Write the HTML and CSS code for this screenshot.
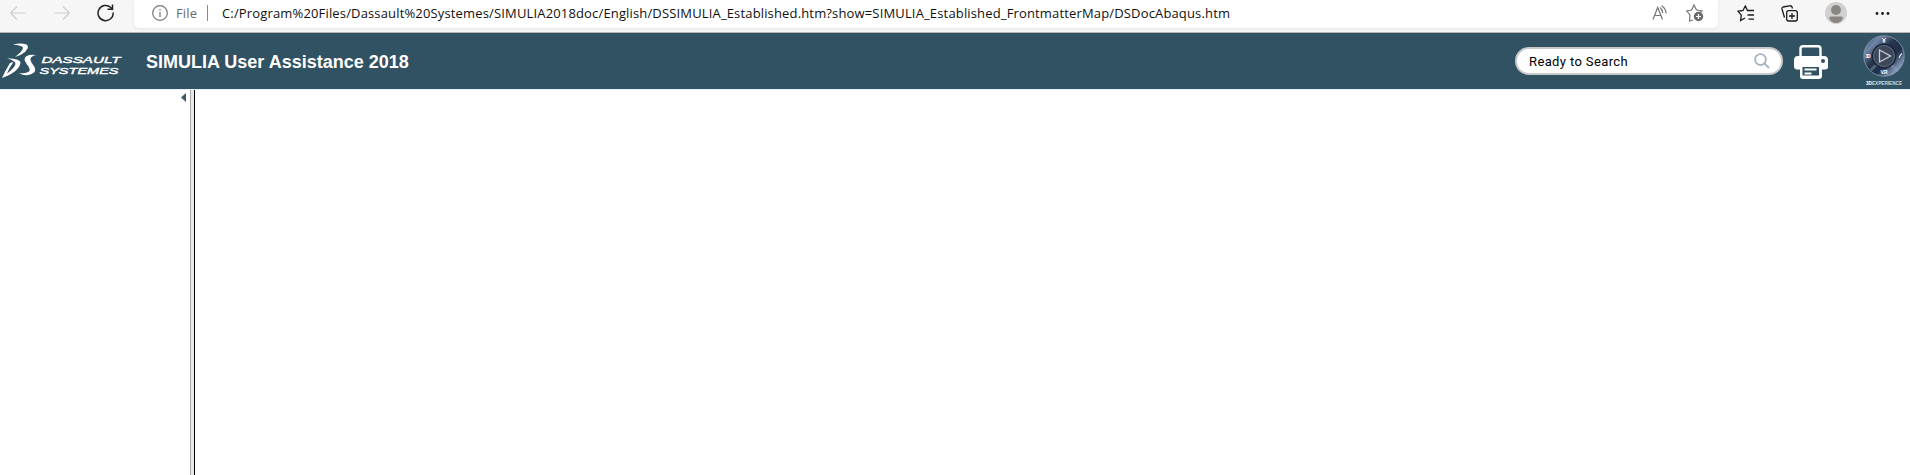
FILE: index.html
```html
<!DOCTYPE html>
<html lang="en">
<head>
<meta charset="utf-8">
<title>SIMULIA User Assistance 2018</title>
<link rel="stylesheet" href="styles.css">
</head>
<body>
<div class="toolbar">
  <div class="nav">
    <svg width="16" height="14" viewBox="0 0 16 14" class="muted"><path d="M16 7H1M7 .5L.7 7L7 13.500"/></svg>
    <svg width="16" height="14" viewBox="0 0 16 14" class="muted"><path d="M0 7H15M9 .5L15.300 7L9 13.500"/></svg>
    <svg width="18" height="18" viewBox="0 0 18 18" class="reload"><path d="M16.200 8.500A7.600 7.600 0 1 1 13.800 3.500L15.500 5M15.500 .5V5.200H10.500"/></svg>
  </div>
  <div class="address">
    <svg class="info" width="16" height="16" viewBox="0 0 16 16"><circle cx="8" cy="8" r="7.300"/><path d="M8 7V12M8 4V5.500"/></svg>
    <span class="scheme">File</span>
    <span class="bar"></span>
    <span class="url">C:/Program%20Files/Dassault%20Systemes/SIMULIA2018doc/English/DSSIMULIA_Established.htm?show=SIMULIA_Established_FrontmatterMap/DSDocAbaqus.htm</span>
    <svg class="read" width="17" height="16" viewBox="0 0 17 16"><path d="M1 14.500L5.700 2.500L10.500 14.500M2.700 10.500H8.800M8 2.500Q10.500 4.500 10.700 8M9.500 .8Q14 3.500 14 8.500"/></svg>
    <svg class="fav" width="18" height="18" viewBox="0 0 18 18"><path d="M7 16L3.500 17L4 11L.8 7L5.600 6L8 1L10.500 6L16 7L14 9"/><circle class="dot" cx="12.500" cy="12.500" r="4.700"/><path class="plus" d="M12.500 10V15M10 12.500H15"/></svg>
  </div>
  <div class="actions">
    <svg width="18" height="17" viewBox="0 0 18 17"><path d="M8 13L3.600 15.500L4.300 10.200L1 6.300L6 5.500L8.300 1L10.500 5.500H17M10.500 10H17M11.500 14.200H17"/></svg>
    <svg width="18" height="17" viewBox="0 0 18 17"><path d="M3.500 12.500L1 4Q.7 2.500 2 2L8.500 .8Q10.500 .5 11 2L11.500 3.500"/><rect x="5.700" y="5.700" width="10.600" height="10.300" rx="2"/><path d="M11 8V14M8 11H14"/></svg>
    <svg class="avatar" width="22" height="22" viewBox="0 0 22 22"><circle cx="11" cy="11" r="11" fill="#d2d0ce"/><circle cx="11" cy="8" r="5" fill="#8a8682"/><path d="M4 16Q4 14.500 6 14.500H16Q18 14.500 18 16Q16 21 11 21T4 16" fill="#8a8682"/></svg>
    <svg class="more" width="15" height="3" viewBox="0 0 15 3"><circle cx="2" cy="1.500" r="1.400"/><circle cx="7.500" cy="1.500" r="1.400"/><circle cx="13" cy="1.500" r="1.400"/></svg>
  </div>
</div>
<header class="header">
  <svg class="logo" width="122" height="36" viewBox="0 0 122 36">
    <path d="M13 1.500Q21 -.5 26.500 1.500Q30 4 25 9Q21 12.500 15 14Q23 8 23 4.500Q21.500 2.500 13 1.500Z"/>
    <path fill-rule="evenodd" d="M7 15.500Q18 15 20.500 19Q20.500 28 2 35Q5 28 10 20L13.500 19Q9 25 7 30.500Q14.500 25 15.500 21Q15.500 17.500 7 15.500Z"/>
    <path d="M36 12Q25 11 24.500 16.500Q25 19 28.500 23.500Q30.500 27 29 28.500Q26 31 19 30Q25 34 31.500 31Q37 29 34.500 24Q30.500 18.500 30.500 16.500Q30 13.500 36 12Z"/>
    <text x="41.500" y="20" textLength="79" lengthAdjust="spacingAndGlyphs">DASSAULT</text>
    <text x="39.500" y="31" textLength="79" lengthAdjust="spacingAndGlyphs">SYSTEMES</text>
  </svg>
  <h1 class="title">SIMULIA User Assistance 2018</h1>
  <div class="search"><span>Ready to Search</span>
    <svg width="16" height="16" viewBox="0 0 16 16"><circle cx="6.500" cy="6.500" r="5.400"/><path d="M10.500 10.500L15 15"/></svg>
  </div>
  <svg class="printer" width="34" height="34" viewBox="0 0 34 34">
    <path d="M6.500 12V4Q6.500 1.300 9 1.300H24Q26.500 1.300 26.500 4V12" fill="none" stroke="#fff" stroke-width="2.400"/>
    <path d="M4 11H30Q34 11 34 15V22Q34 24.500 31 24.500H28V31Q28 34 25 34H9Q6 34 6 31V24.500H3Q0 24.500 0 21V15Q0 11 4 11Z" fill="#fff"/>
    <circle cx="29" cy="16" r="2" fill="#305263"/>
    <rect x="8.500" y="22" width="16.500" height="8.500" rx=".5" fill="#305263"/><path d="M10.500 24.500H22.500M10.500 28.500H17.500" stroke="#fff" stroke-width="2.200"/>
  </svg>
  <svg class="compass" width="42" height="52" viewBox="0 0 42 52">
    <defs><linearGradient id="metal" x1="0" y1="0" x2="1" y2="1"><stop offset="0" stop-color="#25344b"/><stop offset=".22" stop-color="#7186a8"/><stop offset=".42" stop-color="#26364f"/><stop offset=".62" stop-color="#203049"/><stop offset=".82" stop-color="#8094b3"/><stop offset="1" stop-color="#2c405c"/></linearGradient></defs>
    <circle cx="21" cy="21" r="20.200" fill="url(#metal)" stroke="#8f9fb4" stroke-width=".8"/>
    <path d="M28 30L35 36M8 35L14 29" stroke="#91a6c3" stroke-width="3" opacity=".4"/>
    <circle cx="21" cy="21" r="11.700" fill="#3d485b" stroke="#17243a" stroke-width="1.500"/>
    <circle cx="21" cy="21" r="10.500" fill="none" stroke="#66758d" stroke-width=".7"/>
    <path d="M16.500 15V27L27.500 21Z" fill="none" stroke="#c8d0dc" stroke-width="1.300"/>
    <path d="M19 3L21 5L23 3M21 5V8M19.500 6H22.500M36 23L38 19L39 19" fill="none" stroke="#fff"/>
    <text class="mark" x="2.500" y="23" textLength="5">3D</text>
    <text class="mark" x="17.500" y="39" textLength="7">V.R</text>
    <text class="brand" x="3" y="49.500" textLength="36" lengthAdjust="spacingAndGlyphs"><tspan class="heavy">3D</tspan>EXPERIENCE</text>
  </svg>
</header>
<main class="workspace">
  <aside class="sidebar"><svg width="5" height="9" viewBox="0 0 5 9"><path d="M5 0V9L0 4.500Z"/></svg></aside>
  <div class="splitter"></div>
  <section class="content"></section>
</main>
</body>
</html>
```
FILE: styles.css
```css
* { box-sizing: border-box; }
body { margin: 0; height: 475px; overflow: hidden; display: flex; flex-direction: column; background: #fff; font-family: "Liberation Sans", Arial, sans-serif; }
svg { display: block; flex: none; }
.toolbar { height: 33px; flex: none; display: flex; align-items: flex-start; background: #f6f6f6; border-bottom: 1px solid #b4b4b4; }
.nav { width: 134px; height: 26px; padding-left: 10px; display: flex; align-items: center; gap: 28px; fill: none; stroke: #222; stroke-width: 1.500; }
.nav .muted { stroke: #cfcfcf; stroke-width: 1.200; }
.nav .reload { margin-left: -1px; }
.address { width: 1584px; height: 28px; padding: 0 14px 2px 18px; display: flex; align-items: center; background: #fff; border-radius: 0 0 5px 5px; box-shadow: 0 1px 3px #e2e2e2; font: 13px "Open Sans", sans-serif; white-space: nowrap; fill: none; stroke: #767676; stroke-width: 1.200; }
.scheme { margin-left: 8px; width: 31px; color: #6b6b6b; letter-spacing: .15px; }
.bar { width: 1px; height: 16px; background: #8a8a8a; }
.url { margin-left: 14px; color: #111; flex: 1; letter-spacing: .155px; }
.fav { margin-left: 18px; }
.read { margin-right: -1px; }
.dot { fill: #6b6b6b; stroke: none; }
.plus { stroke: #fff; }
.actions { height: 26px; padding-left: 19px; display: flex; align-items: center; gap: 26px; fill: none; stroke: #1b1b1b; stroke-width: 1.300; }
.avatar { stroke: none; }
.more { fill: #1b1b1b; stroke: none; margin-left: 2px; }
.header { height: 57px; flex: none; display: flex; align-items: center; background: #305263; border-bottom: 1px solid #e8eef2; color: #fff; }
.logo { margin-top: -1px; fill: #fff; font: italic 9.600px "Liberation Sans", sans-serif; }
.logo text { stroke: #fff; stroke-width: .4; }
.title { margin: 2px 0 0 24px; font-size: 18px; line-height: 20px; flex: 1; white-space: nowrap; }
.search { width: 268px; height: 28px; padding: 0 11px 0 12px; display: flex; align-items: center; justify-content: space-between; background: #fff; border: 2px solid #c9c9c9; border-radius: 14px; color: #000; font: 13px Roboto, sans-serif; letter-spacing: .38px; }
.search svg { fill: none; stroke: #a5b4c0; stroke-width: 1.800; margin-top: -1px; }
.printer { margin: 2px 35px 0 11px; }
.compass { margin: 0 5px 0 0; }
.mark { font: bold 5px "Liberation Sans", sans-serif; fill: #fff; }
.brand { font: bold 5px "Liberation Sans", sans-serif; fill: #ccd8df; }
.heavy { fill: #fff; }
.workspace { flex: 1; display: flex; }
.sidebar { width: 190px; display: flex; justify-content: flex-end; padding: 3px 4px 0 0; fill: #46565f; }
.splitter { width: 5px; background: #e8e8e8; border-left: 1px solid #a8a8a8; border-right: 1px solid #000; }
.content { flex: 1; }
```
